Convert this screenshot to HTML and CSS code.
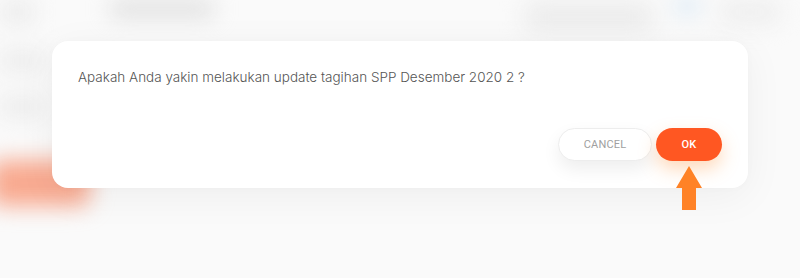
FILE: index.html
```html
<!DOCTYPE html>
<html lang="id">
<head>
<meta charset="utf-8">
<title>Konfirmasi</title>
<link rel="stylesheet" href="styles.css">
</head>
<body>
<div class="backdrop">
  <header class="topbar">
    <div class="brand"></div>
    <div class="title-blob"></div>
    <div class="spacer"></div>
    <div class="search-blob"></div>
    <div class="avatar"></div>
    <div class="user-blob"></div>
  </header>
  <div class="content">
    <aside class="side">
      <div class="side-item"></div>
      <div class="side-item"></div>
      <div class="side-btn"></div>
    </aside>
  </div>
</div>

<div class="overlay">
  <div class="modal">
    <p class="message">Apakah Anda yakin melakukan update tagihan SPP Desember 2020 2 ?</p>
    <div class="actions">
      <button class="btn btn-cancel">CANCEL</button>
      <button class="btn btn-ok">OK
        <svg class="pointer" width="26" height="44" viewBox="0 0 26 44" aria-hidden="true">
          <path d="M13 0 L26 22 L20 22 L20 44 L6 44 L6 22 L0 22 Z" fill="#ff8226"/>
        </svg>
      </button>
    </div>
  </div>
</div>
</body>
</html>
```

FILE: styles.css
```css
html, body {
  margin: 0;
  padding: 0;
}
body {
  width: 800px;
  height: 278px;
  overflow: hidden;
  background: #fafafa;
  font-family: "Inter", "Noto Sans", sans-serif;
  position: relative;
}

/* blurred app behind the dialog */
.backdrop {
  filter: blur(11px);
  height: 278px;
  display: flex;
  flex-direction: column;
}
.topbar {
  height: 30px;
  display: flex;
  align-items: flex-start;
  padding: 0 20px 0 0;
  gap: 20px;
}
.brand {
  width: 34px;
  height: 24px;
  background: #ececec;
}
.title-blob {
  width: 104px;
  height: 12px;
  margin-top: 3px;
  margin-left: 56px;
  background: #d4d4d4;
  border-radius: 4px;
}
.spacer { flex: 1; }
.search-blob {
  width: 130px;
  height: 30px;
  margin-top: 2px;
  background: #ececec;
  border-radius: 10px;
}
.avatar {
  width: 26px;
  height: 12px;
  background: #c9e0f3;
  border-radius: 50%;
}
.user-blob {
  width: 60px;
  height: 24px;
  background: #eeeeee;
  border-radius: 8px;
}
.content {
  flex: 1;
  display: flex;
}
.side {
  width: 90px;
  display: flex;
  flex-direction: column;
  padding-top: 20px;
  gap: 24px;
}
.side-item {
  width: 44px;
  height: 22px;
  background: #ececec;
}
.side-btn {
  margin-top: 18px;
  margin-left: -10px;
  width: 100px;
  height: 46px;
  background: #f8a98f;
  border-radius: 10px;
}

/* dialog */
.overlay {
  position: absolute;
  inset: 0;
  padding-top: 41px;
  display: flex;
  justify-content: center;
  align-items: flex-start;
}
.modal {
  width: 696px;
  box-sizing: border-box;
  background: #ffffff;
  border-radius: 16px;
  padding: 26px 26px 27px 26px;
  box-shadow: 0 8px 40px rgba(0, 0, 0, 0.05), 0 0 10px rgba(0, 0, 0, 0.02);
  display: flex;
  flex-direction: column;
}
.message {
  margin: 0;
  font-size: 13.5px;
  line-height: 20px;
  color: #555555;
  font-weight: 300;
}
.actions {
  margin-top: 41px;
  display: flex;
  justify-content: flex-end;
  gap: 4px;
}
.btn {
  height: 33px;
  border-radius: 17px;
  font-family: Roboto, "Liberation Sans", sans-serif;
  font-size: 11px;
  font-weight: 500;
  letter-spacing: 0.2px;
  cursor: pointer;
  padding: 0;
}
.btn-cancel {
  width: 94px;
  background: #ffffff;
  color: #a0a0a0;
  font-weight: 400;
  border: 1px solid #ededed;
  box-shadow: 0 8px 18px rgba(0, 0, 0, 0.07);
}
.btn-ok {
  width: 66px;
  background: #ff5722;
  color: #ffffff;
  border: none;
  position: relative;
  box-shadow: 0 8px 18px rgba(255, 150, 60, 0.35);
}
.pointer {
  position: absolute;
  left: 20px;
  top: 38px;
}
```
